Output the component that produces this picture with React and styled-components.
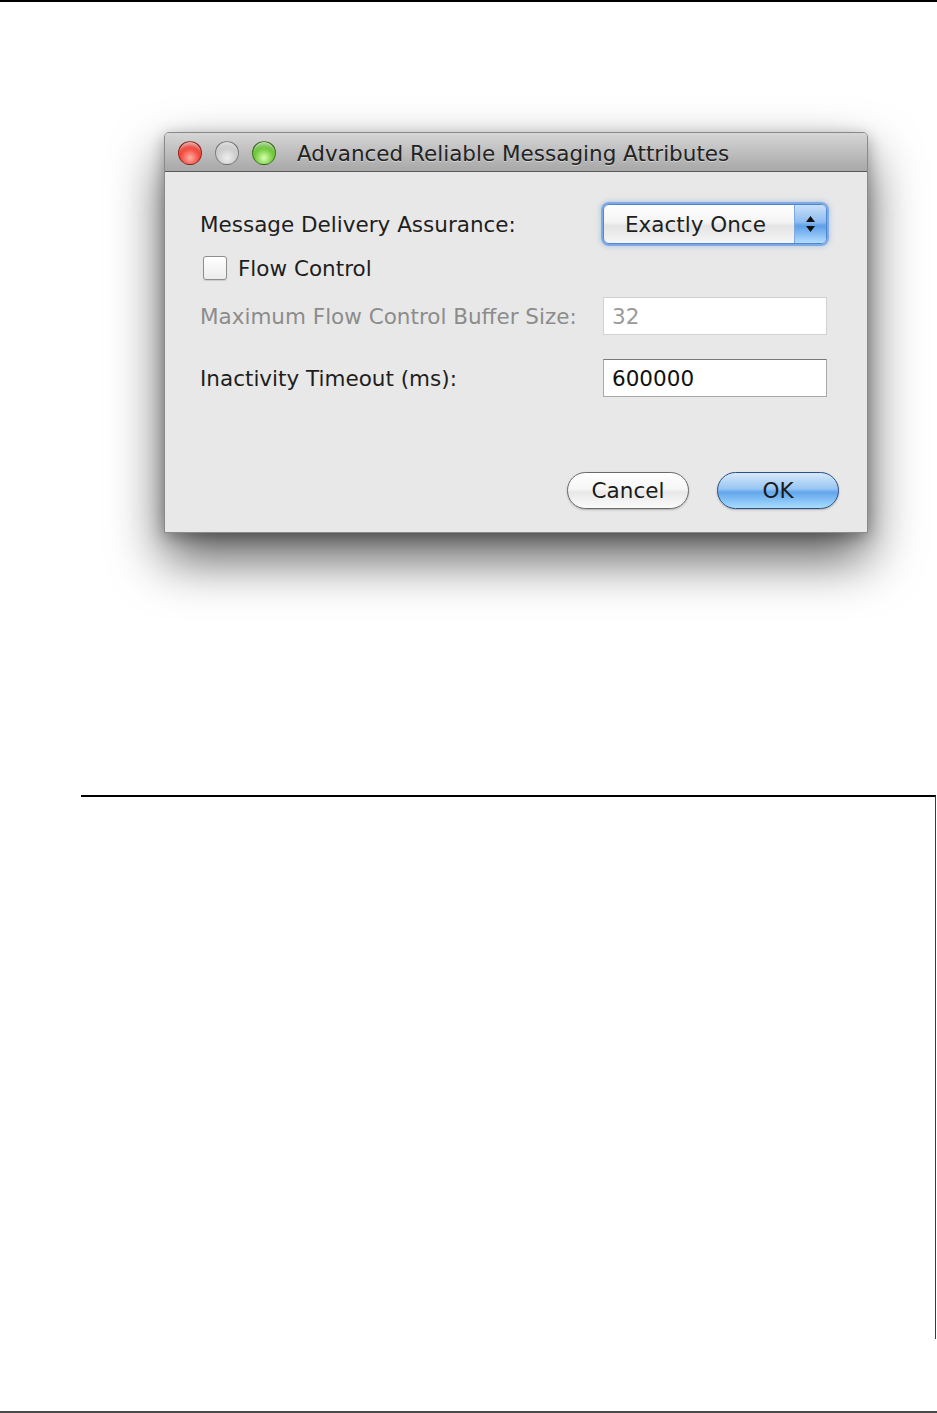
import React from 'react'
import styled, { createGlobalStyle } from 'styled-components'

const Global = createGlobalStyle`
    html, body {
        margin: 0;
        padding: 0;
        background: #ffffff;
    }
    * {
        box-sizing: border-box;
    }
`;

const Page = styled.div`
    width: 937px;
    height: 1413px;
    background: #ffffff;
    border-top: 2px solid #000000;
    border-bottom: 2px solid #4a4a4a;
    font-family: "DejaVu Sans", "Liberation Sans", sans-serif;
    display: flex;
    flex-direction: column;
`;

const Stage = styled.div`
    padding: 130px 0 0 164px;
`;

const Window = styled.div`
    width: 704px;
    border: 1px solid #8a8a8a;
    border-radius: 5px 5px 0 0;
    background: #e8e8e8;
    box-shadow: 0 26px 52px rgba(0, 0, 0, 0.64), 0 4px 16px rgba(0, 0, 0, 0.3);
    display: flex;
    flex-direction: column;
`;

const TitleBar = styled.div`
    height: 39px;
    display: flex;
    align-items: center;
    padding: 2px 0 0 13px;
    border-radius: 4px 4px 0 0;
    background: linear-gradient(#d6d6d6 0%, #c3c3c3 40%, #a8a8a8 100%);
    border-bottom: 1px solid #5a5a5a;
`;

const Lights = styled.div`
    display: flex;
    gap: 13px;
    margin-right: 21px;
`;

const lightColors = {
    red: ['#ffb0a8', '#f23a2c', '#8e1208'],
    gray: ['#eeeeee', '#c9c9c9', '#8f8f8f'],
    green: ['#d8ffb0', '#62c22c', '#2f6e0c'],
};

const Light = styled.span`
    width: 24px;
    height: 24px;
    border-radius: 50%;
    border: 1px solid rgba(0, 0, 0, 0.35);
    background: radial-gradient(circle at 50% 72%, ${p => lightColors[p.$tone][0]} 0%, ${p => lightColors[p.$tone][1]} 55%, ${p => lightColors[p.$tone][2]} 100%);
    box-shadow: inset 0 6px 4px -3px rgba(255, 255, 255, 0.7);
`;

const Title = styled.div`
    font-size: 21.5px;
    color: #232323;
    text-shadow: 0 1px 0 rgba(255, 255, 255, 0.45);
`;

const Content = styled.div`
    padding: 32px 0 23px 35px;
    display: flex;
    flex-direction: column;
`;

const Row = styled.div`
    height: ${p => p.$h}px;
    margin-top: ${p => p.$gap || 0}px;
    padding-right: 40px;
    display: flex;
    align-items: center;
    justify-content: space-between;
`;

const Label = styled.span`
    font-size: 21.5px;
    color: ${p => (p.$disabled ? '#8c8c8c' : '#1e1e1e')};
`;

const Popup = styled.div`
    width: 224px;
    height: 40px;
    border: 1px solid #4f86d0;
    border-radius: 6px;
    box-shadow: 0 0 0 2px rgba(110, 160, 225, 0.8), 0 0 5px 3px rgba(110, 160, 225, 0.4);
    background: linear-gradient(#ffffff 0%, #f4f4f4 45%, #e4e4e4 55%, #f6f6f6 100%);
    display: flex;
    align-items: stretch;
    overflow: hidden;
`;

const PopupText = styled.span`
    flex: 1;
    padding-left: 21px;
    display: flex;
    align-items: center;
    font-size: 21.5px;
    color: #1e1e1e;
`;

const PopupArrows = styled.span`
    width: 32px;
    border-left: 1px solid #7fa9dc;
    background: linear-gradient(#c8e0fa 0%, #8ebcf0 45%, #5f9fe8 55%, #b2dcff 100%);
    display: flex;
    flex-direction: column;
    align-items: center;
    justify-content: center;
    gap: 4px;
`;

const Check = styled.span`
    width: 24px;
    height: 24px;
    margin-left: 3px;
    border: 1px solid #8e8e8e;
    border-radius: 3px;
    background: linear-gradient(#ffffff, #ececec);
    box-shadow: 0 1px 1px rgba(0, 0, 0, 0.12);
`;

const CheckLabel = styled.label`
    display: flex;
    align-items: center;
    gap: 11px;
`;

const Field = styled.div`
    width: 224px;
    height: 38px;
    padding-left: 8px;
    display: flex;
    align-items: center;
    background: #ffffff;
    font-size: 21.5px;
    color: ${p => (p.$disabled ? '#9a9a9a' : '#111111')};
    border: 1px solid ${p => (p.$disabled ? '#d2d2d2' : '#a8a8a8')};
    border-top-color: ${p => (p.$disabled ? '#cfcfcf' : '#7a7a7a')};
`;

const ButtonRow = styled.div`
    margin-top: 75px;
    padding-right: 28px;
    display: flex;
    justify-content: flex-end;
    gap: 28px;
`;

const Button = styled.button`
    width: 122px;
    height: 37px;
    border-radius: 19px;
    font-family: "DejaVu Sans", "Liberation Sans", sans-serif;
    font-size: 21.5px;
    color: #1a1a1a;
    cursor: pointer;
    border: 1px solid ${p => (p.$primary ? '#2c4f86' : '#6a6a6a')};
    background: ${p =>
        p.$primary
            ? 'linear-gradient(#d6e8fb 0%, #98c6f2 45%, #62a6ec 55%, #a8ddff 100%)'
            : 'linear-gradient(#ffffff 0%, #f6f6f6 45%, #e8e8e8 55%, #fbfbfb 100%)'};
    box-shadow: 0 1px 2px rgba(0, 0, 0, 0.25);
`;

const Frame = styled.div`
    margin: 262px 0 0 81px;
    width: 855px;
    height: 544px;
    border-top: 2px solid #000000;
    border-right: 1px solid #3a3a3a;
`;

const Arrow = ({ up }) => (
    <svg width="9" height="6" viewBox="0 0 9 6">
        <path d={up ? 'M4.5 0 L9 6 L0 6 Z' : 'M0 0 L9 0 L4.5 6 Z'} fill="#111" />
    </svg>
);

export default function App() {
    return (
        <Page>
            <Global />
            <Stage>
                <Window>
                    <TitleBar>
                        <Lights>
                            <Light $tone="red" />
                            <Light $tone="gray" />
                            <Light $tone="green" />
                        </Lights>
                        <Title>Advanced Reliable Messaging Attributes</Title>
                    </TitleBar>
                    <Content>
                        <Row $h={40}>
                            <Label>Message Delivery Assurance:</Label>
                            <Popup>
                                <PopupText>Exactly Once</PopupText>
                                <PopupArrows>
                                    <Arrow up />
                                    <Arrow />
                                </PopupArrows>
                            </Popup>
                        </Row>
                        <Row $h={24} $gap={12}>
                            <CheckLabel>
                                <Check />
                                <Label>Flow Control</Label>
                            </CheckLabel>
                        </Row>
                        <Row $h={38} $gap={17}>
                            <Label $disabled>Maximum Flow Control Buffer Size:</Label>
                            <Field $disabled>32</Field>
                        </Row>
                        <Row $h={38} $gap={24}>
                            <Label>Inactivity Timeout (ms):</Label>
                            <Field>600000</Field>
                        </Row>
                        <ButtonRow>
                            <Button>Cancel</Button>
                            <Button $primary>OK</Button>
                        </ButtonRow>
                    </Content>
                </Window>
            </Stage>
            <Frame />
        </Page>
    );
}
